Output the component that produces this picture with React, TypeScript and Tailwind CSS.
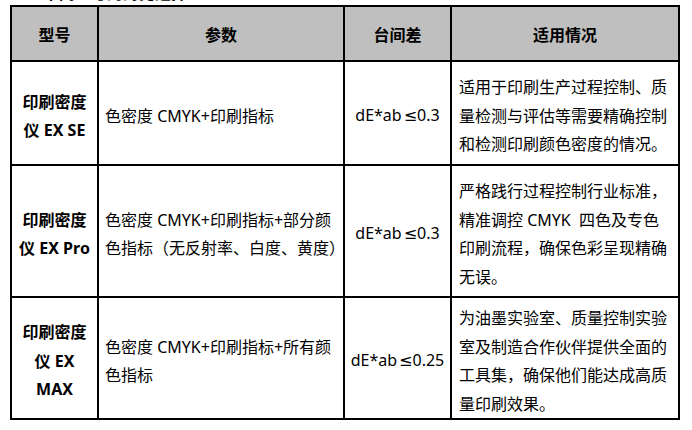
const rows = [
  {
    model: ["印刷密度", "仪 EX SE"],
    params: ["色密度 CMYK+印刷指标"],
    delta: "0.3",
    usage: ["适用于印刷生产过程控制、质", "量检测与评估等需要精确控制", "和检测印刷颜色密度的情况。"],
    h: "h-[104px]",
  },
  {
    model: ["印刷密度", "仪 EX Pro"],
    params: ["色密度 CMYK+印刷指标+部分颜", "色指标（无反射率、白度、黄度）"],
    delta: "0.3",
    usage: ["严格践行过程控制行业标准，", "精准调控 CMYK  四色及专色", "印刷流程，确保色彩呈现精确", "无误。"],
    h: "h-[132px]",
  },
  {
    model: ["印刷密度", "仪 EX", "MAX"],
    params: ["色密度 CMYK+印刷指标+所有颜", "色指标"],
    delta: "0.25",
    usage: ["为油墨实验室、质量控制实验", "室及制造合作伙伴提供全面的", "工具集，确保他们能达成高质", "量印刷效果。"],
    h: "h-[119px]",
  },
];

function Lines({ lines }: { lines: string[] }) {
  return (
    <>
      {lines.map((l, i) => (
        <span key={i} className="block whitespace-pre">
          {l}
        </span>
      ))}
    </>
  );
}

export default function App() {
  return (
    <div
      className="w-[692px] h-[430px] bg-white text-black overflow-hidden"
      style={{ fontFamily: '"Noto Sans", "Noto Sans CJK SC", sans-serif' }}
    >
      <div className="h-[5px] overflow-hidden pl-[43px]">
        <div className="-mt-[18px] text-[16px] leading-[22px] font-bold">不同型号的对比选择</div>
      </div>
      <table className="ml-[10px] w-[668px] table-fixed border-collapse text-[16px] leading-[28.5px]">
        <colgroup>
          <col className="w-[87px]" />
          <col className="w-[246px]" />
          <col className="w-[107px]" />
          <col className="w-[228px]" />
        </colgroup>
        <thead>
          <tr className="h-[55px] bg-[#bfbfbf] font-bold">
            <th className="border-2 border-black text-center pt-[3px]">型号</th>
            <th className="border-2 border-black text-center pt-[3px]">参数</th>
            <th className="border-2 border-black text-center pt-[3px]">台间差</th>
            <th className="border-2 border-black text-center pt-[3px]">适用情况</th>
          </tr>
        </thead>
        <tbody>
          {rows.map((r, i) => (
            <tr key={i} className={r.h}>
              <td className="border-2 border-black text-center font-bold align-middle px-1 pt-[6px]">
                <Lines lines={r.model} />
              </td>
              <td className="border-2 border-black align-middle pl-[6px] pr-1 pt-[6px]">
                <Lines lines={r.params} />
              </td>
              <td className="border-2 border-black text-center align-middle pt-[6px]">
                dE*ab
                <span className="ml-[2px]" style={{ fontFamily: '"DejaVu Sans", sans-serif' }}>
                  ≤
                </span>
                {r.delta}
              </td>
              <td className="border-2 border-black align-middle pl-[7px] pr-1 pt-[6px]">
                <Lines lines={r.usage} />
              </td>
            </tr>
          ))}
        </tbody>
      </table>
    </div>
  );
}
